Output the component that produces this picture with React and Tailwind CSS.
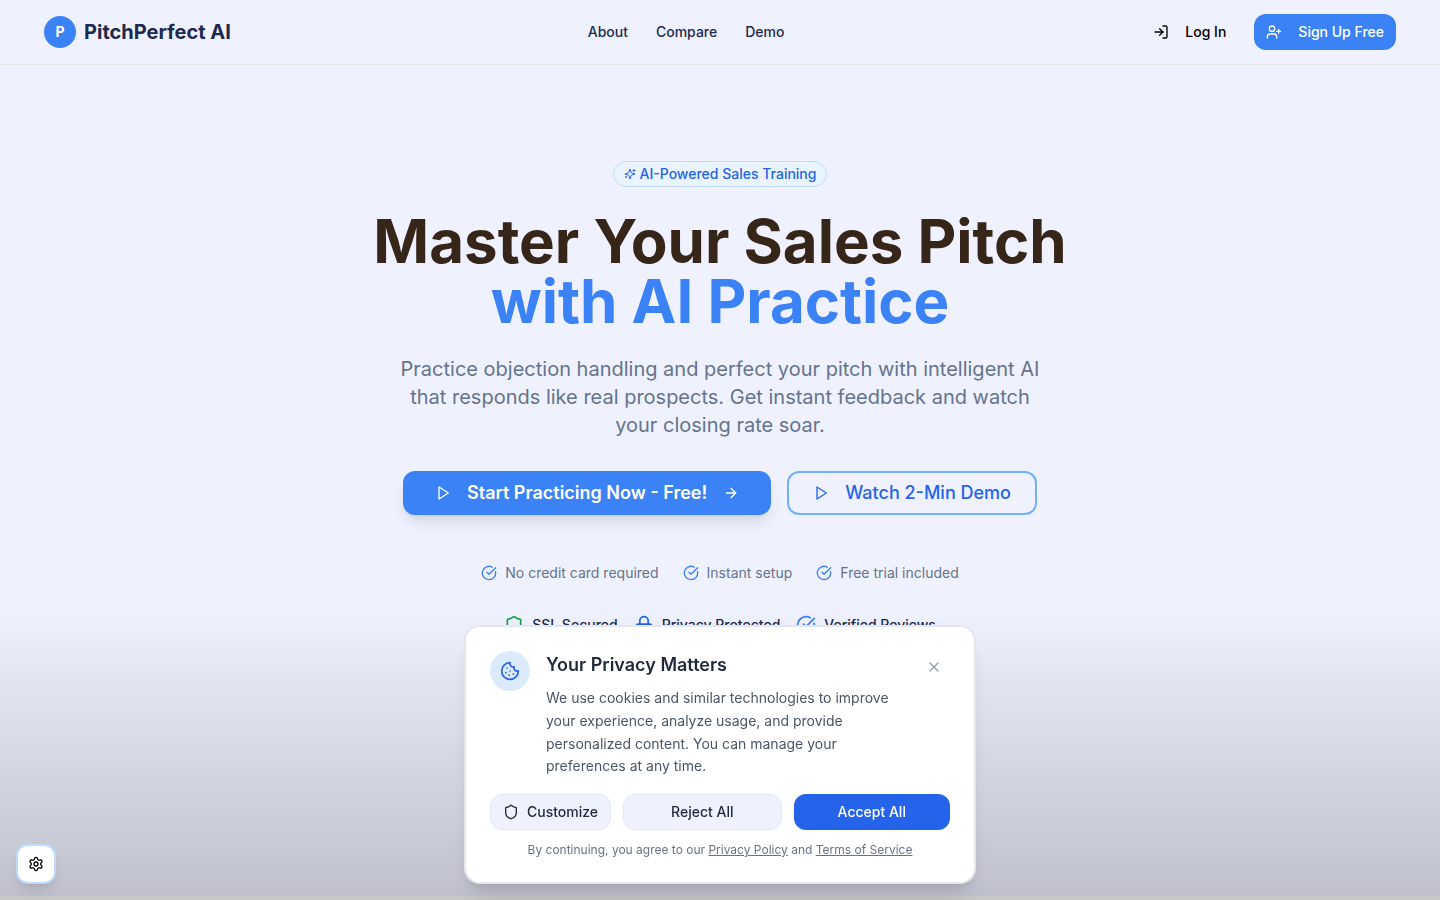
import { ArrowRight, CircleCheckBig, Cookie, Lock, LogIn, Settings, Shield, UserPlus, X } from "lucide-react";

const perks = ["No credit card required", "Instant setup", "Free trial included"];

const badges = [
  { label: "SSL Secured", Icon: Shield, color: "text-[#16a34a]" },
  { label: "Privacy Protected", Icon: Lock, color: "text-[#2563eb]" },
  { label: "Verified Reviews", Icon: CircleCheckBig, color: "text-[#3b82f6]" },
];

function LineIcon({ className, children }) {
  return (
    <svg className={className} viewBox="0 0 24 24" fill="none" stroke="currentColor" strokeWidth="2" strokeLinecap="round" strokeLinejoin="round" aria-hidden="true">
      {children}
    </svg>
  );
}

function PlayIcon() {
  return (
    <LineIcon className="size-4">
      <polygon points="6 3 20 12 6 21 6 3" />
    </LineIcon>
  );
}

function SparklesIcon() {
  return (
    <LineIcon className="size-3">
      <path d="M9.937 15.5A2 2 0 0 0 8.5 14.063l-6.135-1.582a.5.5 0 0 1 0-.962L8.5 9.936A2 2 0 0 0 9.937 8.5l1.582-6.135a.5.5 0 0 1 .963 0L14.063 8.5A2 2 0 0 0 15.5 9.937l6.135 1.581a.5.5 0 0 1 0 .964L15.5 14.063a2 2 0 0 0-1.437 1.437l-1.582 6.135a.5.5 0 0 1-.963 0z" />
      <path d="M20 3v4" />
      <path d="M22 5h-4" />
      <path d="M4 17v2" />
      <path d="M5 18H3" />
    </LineIcon>
  );
}

function Header() {
  return (
    <header className="border-b border-gray-200">
      <div className="mx-auto flex h-16 max-w-[1400px] items-center justify-between px-6">
        <a href="#" className="flex items-center gap-2">
          <span className="flex size-8 items-center justify-center rounded-full bg-[#3b82f6] text-sm font-bold text-white">P</span>
          <span className="text-xl font-bold text-[#1b2a4e]">PitchPerfect AI</span>
        </a>
        <nav className="flex items-center gap-7 text-sm font-medium text-[#1b2a4e]">
          <a href="#about">About</a>
          <a href="#compare">Compare</a>
          <a href="#demo">Demo</a>
        </nav>
        <div className="flex items-center gap-4 text-sm font-medium">
          <button className="flex h-9 items-center gap-4 rounded-xl px-3 text-black">
            <LogIn className="size-4" />
            Log In
          </button>
          <button className="flex h-9 items-center gap-4 rounded-xl bg-[#3b82f6] px-3 text-white">
            <UserPlus className="size-4" />
            Sign Up Free
          </button>
        </div>
      </div>
    </header>
  );
}

function Hero() {
  return (
    <section className="flex flex-col items-center px-6 pt-24 pb-[261px] text-center">
      <div className="flex items-center gap-1 rounded-full border border-[#bfdbfe] bg-[#eaf4ff] px-2.5 py-0.5 text-sm font-medium text-[#2563eb]">
        <SparklesIcon />
        AI-Powered Sales Training
      </div>
      <h1 className="mt-6 text-6xl leading-none font-bold text-[#352619]">
        Master Your Sales Pitch
        <span className="block text-[#3b82f6]">with AI Practice</span>
      </h1>
      <p className="mt-6 max-w-[656px] text-xl text-[#64748b]">
        Practice objection handling and perfect your pitch with intelligent AI that responds like real prospects. Get instant feedback and watch your closing rate soar.
      </p>
      <div className="mt-8 flex gap-4 text-lg">
        <button className="flex h-11 items-center gap-4 rounded-xl bg-[#3b82f6] px-8 font-semibold text-white shadow-lg">
          <PlayIcon />
          Start Practicing Now - Free!
          <ArrowRight className="size-4" />
        </button>
        <button className="flex h-11 items-center gap-4 rounded-xl border-2 border-[#70b0ff] px-6 font-medium text-[#2563eb]">
          <PlayIcon />
          Watch 2-Min Demo
        </button>
      </div>
      <ul className="mt-12 flex gap-6 text-sm text-[#64748b]">
        {perks.map((perk) => (
          <li key={perk} className="flex items-center gap-2">
            <CircleCheckBig className="size-4 text-[#3b82f6]" />
            {perk}
          </li>
        ))}
      </ul>
      <ul className="mt-8 flex gap-4 text-sm font-medium text-[#1b2a4e]">
        {badges.map(({ label, Icon, color }) => (
          <li key={label} className="flex items-center gap-2">
            <Icon className={`size-5 ${color}`} />
            {label}
          </li>
        ))}
      </ul>
    </section>
  );
}

function CookieBanner() {
  return (
    <div className="fixed inset-x-0 bottom-0 flex justify-center bg-linear-to-t from-black/20 to-transparent p-4">
      <section aria-labelledby="privacy-title" className="w-full max-w-lg rounded-2xl border-2 border-gray-200 bg-white p-6 shadow-xl">
        <div className="flex items-start gap-4">
          <div className="flex size-10 shrink-0 items-center justify-center rounded-full bg-[#dbeafe]">
            <Cookie className="size-5 text-[#2563eb]" />
          </div>
          <div className="flex-1">
            <h2 id="privacy-title" className="text-lg font-semibold text-gray-800">Your Privacy Matters</h2>
            <p className="mt-2 text-sm leading-relaxed text-gray-600">
              We use cookies and similar technologies to improve your experience, analyze usage, and provide personalized content. You can manage your preferences at any time.
            </p>
          </div>
          <button aria-label="Close" className="flex size-8 shrink-0 items-center justify-center text-gray-400">
            <X className="size-4" />
          </button>
        </div>
        <div className="mt-4 flex gap-3 text-sm font-medium">
          <button className="flex h-9 items-center gap-2 rounded-xl border border-slate-200 bg-[#eff1ff] px-3 text-gray-800">
            <Shield className="size-4" />
            Customize
          </button>
          <button className="h-9 flex-1 rounded-xl border border-slate-200 bg-[#eff1ff] px-3 text-gray-800">Reject All</button>
          <button className="h-9 flex-1 rounded-xl bg-[#2563eb] px-3 text-white">Accept All</button>
        </div>
        <p className="mt-3 text-center text-xs text-gray-500">
          By continuing, you agree to our <a href="#privacy" className="underline">Privacy Policy</a> and <a href="#terms" className="underline">Terms of Service</a>
        </p>
      </section>
    </div>
  );
}

export default function App() {
  return (
    <div className="flex min-h-screen flex-col bg-[#eff1ff] font-['Inter',sans-serif]">
      <Header />
      <Hero />
      <div className="flex-1 bg-[#fafafa]" />
      <CookieBanner />
      <button aria-label="Settings" className="fixed bottom-4 left-4 flex size-10 items-center justify-center rounded-xl border-2 border-[#bfdbfe] bg-white text-black shadow-lg">
        <Settings className="size-4" />
      </button>
    </div>
  );
}
